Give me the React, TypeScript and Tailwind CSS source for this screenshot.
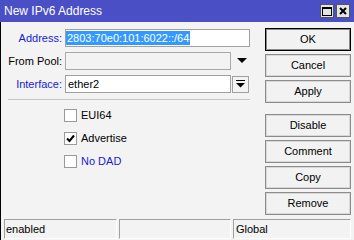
const font = { fontFamily: '"Liberation Sans", Arial, sans-serif' };

function Btn({ label, primary }: { label: string; primary?: boolean }) {
  return (
    <button
      className={
        "h-[23px] w-[86px] bg-[#f2f2f2] text-[11px] text-black flex items-center justify-center border " +
        (primary ? "border-black shadow-[inset_0_0_0_1px_#8a8a8a]" : "border-[#8c8c8c] shadow-[inset_0_0_0_1px_#d8d8d8]")
      }
    >
      {label}
    </button>
  );
}

function Check({ label, checked, blue }: { label: string; checked?: boolean; blue?: boolean }) {
  return (
    <div className="flex items-center h-[13px]">
      <div className="w-[13px] h-[13px] border border-[#9a9a9a] bg-white flex items-center justify-center">
        {checked && (
          <svg width="9" height="9" viewBox="0 0 9 9">
            <path d="M1 4.5 L3.5 7 L8 1.5" stroke="#000" strokeWidth="2" fill="none" />
          </svg>
        )}
      </div>
      <span className={"ml-[4px] text-[11px] " + (blue ? "text-[#1a1ad8]" : "text-black")}>{label}</span>
    </div>
  );
}

export default function App() {
  return (
    <div className="w-[354px] h-[240px] bg-[#f3f3f3] flex flex-col overflow-hidden" style={font}>
      <div className="h-[22px] bg-[#4b4fc6] flex items-center justify-between pl-[4px] pr-[4px]">
        <span className="text-white text-[12px]">New IPv6 Address</span>
        <div className="flex gap-[2px]">
          <div className="w-[14px] h-[14px] bg-[#e4e4e4] border border-[#555] flex items-center justify-center">
            <div className="w-[10px] h-[9px] border border-black border-t-2" />
          </div>
          <div className="w-[14px] h-[14px] bg-[#e4e4e4] border border-[#555] flex items-center justify-center">
            <svg width="8" height="8" viewBox="0 0 8 8">
              <path d="M1 1 L7 7 M7 1 L1 7" stroke="#000" strokeWidth="2" />
            </svg>
          </div>
        </div>
      </div>

      <div className="flex-1 flex border-l border-black">
        <div className="w-[264px] flex flex-col">
          <div className="mt-[7px] flex items-center h-[18px]">
            <span className="w-[63px] pr-[2px] text-right text-[11px] text-[#1a1ad8]">Address:</span>
            <div className="ml-[1px] w-[185px] h-[18px] border border-[#a0a0a0] bg-white flex items-center">
              <span className="bg-[#3399ff] text-white text-[11px] leading-[14px] px-[1px]">2803:70e0:101:6022::/64</span>
            </div>
          </div>
          <div className="mt-[5px] flex items-center h-[18px]">
            <span className="w-[63px] pr-[2px] text-right text-[11px] text-black">From Pool:</span>
            <div className="ml-[1px] w-[166px] h-[18px] border border-[#a8a8a8] bg-[#f3f3f3]" />
            <svg className="ml-[6px]" width="10" height="6" viewBox="0 0 10 6">
              <path d="M0 0 H10 L5 5 Z" fill="#000" />
            </svg>
          </div>
          <div className="mt-[5px] flex items-center h-[18px]">
            <span className="w-[63px] pr-[2px] text-right text-[11px] text-[#1a1ad8]">Interface:</span>
            <div className="ml-[1px] w-[166px] h-[18px] border border-[#a0a0a0] bg-white flex items-center pl-[2px] text-[11px] text-black">
              ether2
            </div>
            <div className="ml-[1px] w-[17px] h-[17px] border border-[#a0a0a0] bg-[#f3f3f3] flex items-center justify-center">
              <svg width="9" height="8" viewBox="0 0 9 8">
                <path d="M0 0.5 H9" stroke="#000" strokeWidth="1" />
                <path d="M0 3 H9 L4.5 7.5 Z" fill="#000" />
              </svg>
            </div>
          </div>
          <div className="mt-[6px] ml-[7px] w-[242px] h-px bg-[#c4c4c4]" />
          <div className="mt-[9px] ml-[63px] flex flex-col gap-[10px]">
            <Check label="EUI64" />
            <Check label="Advertise" checked />
            <Check label="No DAD" blue />
          </div>
        </div>
        <div className="pt-[6px] flex flex-col gap-[3px]">
          <Btn label="OK" primary />
          <Btn label="Cancel" />
          <Btn label="Apply" />
          <div className="h-[5px]" />
          <Btn label="Disable" />
          <Btn label="Comment" />
          <Btn label="Copy" />
          <Btn label="Remove" />
        </div>
      </div>

      <div className="h-[21px] flex gap-[2px] pl-[3px] pr-[3px] pb-[1px] border-l border-black">
        <div className="w-[113px] border-t border-l border-[#a0a0a0] border-b border-r border-b-white border-r-white flex items-center pl-[1px] text-[11px] text-black">
          enabled
        </div>
        <div className="w-[112px] border-t border-l border-[#a0a0a0] border-b border-r border-b-white border-r-white" />
        <div className="flex-1 border-t border-l border-[#a0a0a0] border-b border-r border-b-white border-r-white flex items-center pl-[2px] text-[11px] text-black">
          Global
        </div>
      </div>
    </div>
  );
}
